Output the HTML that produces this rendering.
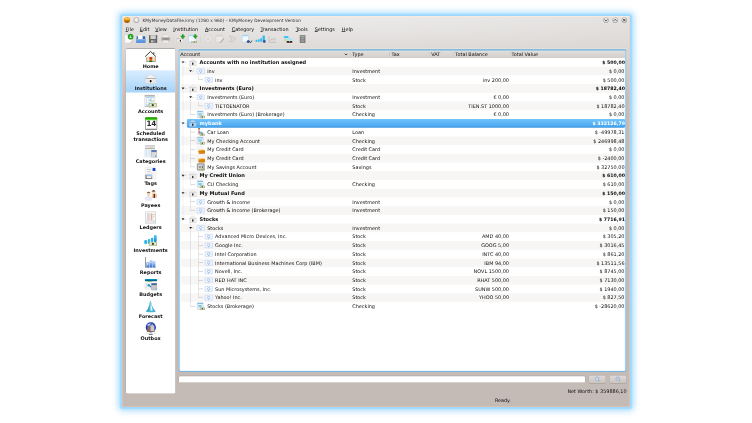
<!DOCTYPE html>
<html lang="en"><head><meta charset="utf-8"><title>KMyMoney</title>
<style>
html,body{margin:0;padding:0;background:#fff;}
body{width:752px;height:423px;overflow:hidden;position:relative;font-family:"DejaVu Sans","Liberation Sans",sans-serif;font-size:4.93px;color:#0c0c0c;line-height:1;}
#root{position:absolute;left:0;top:0;width:752px;height:423px;will-change:transform;}
*{box-sizing:border-box;}
.abs{position:absolute;}
#win{position:absolute;left:122px;top:16px;width:508px;height:391px;border-radius:1.6px;
 background:radial-gradient(ellipse 300px 42px at 45% 0,rgba(255,255,255,.28),rgba(255,255,255,0) 100%),linear-gradient(to bottom,#e5e3e1 0px,#dfdcda 22px,#dad6d3 36px,#cfc9c5 58px,#c7beba 80px,#c4bab6 100px);
 box-shadow:inset 0 .7px 0 rgba(255,248,242,.7),inset 0 0 0 .8px rgba(248,200,175,.55),0 0 1.6px 1.1px rgba(156,217,255,1),0 0 6px 3.3px rgba(160,216,255,.85);}
.t{position:absolute;white-space:nowrap;line-height:6px;height:6px;}
.b{font-weight:bold;font-size:5.0px;}
.bv{font-size:4.65px;}
u{text-decoration:underline;text-decoration-thickness:.4px;text-underline-offset:.15px;text-decoration-color:#555;}
.sl{position:absolute;left:126px;width:49.3px;text-align:center;font-weight:bold;line-height:6px;height:6px;white-space:nowrap;color:#111;}
.w{color:#fff;}
.ra{text-align:right;}
#ov,#un{position:absolute;left:0;top:0;width:752px;height:423px;pointer-events:none;}
</style></head><body><div id="root">
<div id="win"></div>
<svg id="un" viewBox="0 0 752 423" width="752" height="423"><defs>
<linearGradient id="gs" x1="0" y1="0" x2="0" y2="1"><stop offset="0" stop-color="#d9edff"/><stop offset="1" stop-color="#a6d3f9"/></linearGradient>
<linearGradient id="gtf" x1="0" y1="0" x2="0" y2="1"><stop offset="0" stop-color="#84bcdc"/><stop offset=".007" stop-color="#84bcdc"/><stop offset=".013" stop-color="#7cc6f6"/><stop offset=".99" stop-color="#7cc6f6"/><stop offset="1" stop-color="#66a6d4"/></linearGradient>
<linearGradient id="gh" x1="0" y1="0" x2="0" y2="1"><stop offset="0" stop-color="#e6e2df"/><stop offset=".12" stop-color="#dedbd8"/><stop offset="1" stop-color="#d3cfcc"/></linearGradient>
<linearGradient id="gsel" x1="0" y1="0" x2="0" y2="1"><stop offset="0" stop-color="#72c4fc"/><stop offset=".4" stop-color="#5eb6f6"/><stop offset=".8" stop-color="#4eaaf0"/><stop offset="1" stop-color="#3b98e2"/></linearGradient>
<linearGradient id="gbt" x1="0" y1="0" x2="0" y2="1"><stop offset="0" stop-color="#dedad7"/><stop offset="1" stop-color="#cbc5c1"/></linearGradient>
</defs>
<rect x="125.7" y="48.5" width="49.9" height="345.3" rx="1.5" fill="#8f8a86" opacity=".45"/>
<rect x="126.3" y="48.35" width="48.7" height="1.2" rx=".6" fill="#8f8b88" opacity=".6"/>
<rect x="126" y="49.1" width="49.3" height="344.4" rx="1.2" fill="#fff"/>
<rect x="126" y="70.3" width="49.3" height="22.3" rx="1" fill="url(#gs)"/>
<rect x="178.7" y="48.5" width="447.5" height="2" rx="1" fill="#f6e4da" opacity=".9"/>
<rect x="178.7" y="49" width="447.5" height="323" rx="1.4" fill="url(#gtf)"/>
<rect x="179.8" y="50.9" width="445.3" height="320" rx=".5" fill="#fff"/>
<rect x="179.8" y="50.9" width="445.3" height="320" rx=".5" fill="none" stroke="#bfe4fc" stroke-width=".6" opacity=".8"/>
<rect x="179.8" y="50.9" width="445.3" height="7.1" fill="url(#gh)"/>
<rect x="181.3" y="66.71" width="443.8" height="8.714" fill="#f7f6f5"/>
<rect x="181.3" y="84.14" width="443.8" height="8.714" fill="#f7f6f5"/>
<rect x="181.3" y="101.57" width="443.8" height="8.714" fill="#f7f6f5"/>
<rect x="186.9" y="119.05" width="438.3" height="8.6" rx="1.4" fill="url(#gsel)"/>
<rect x="181.3" y="136.43" width="443.8" height="8.714" fill="#f7f6f5"/>
<rect x="181.3" y="153.85" width="443.8" height="8.714" fill="#f7f6f5"/>
<rect x="181.3" y="171.28" width="443.8" height="8.714" fill="#f7f6f5"/>
<rect x="181.3" y="188.71" width="443.8" height="8.714" fill="#f7f6f5"/>
<rect x="181.3" y="206.14" width="443.8" height="8.714" fill="#f7f6f5"/>
<rect x="181.3" y="223.57" width="443.8" height="8.714" fill="#f7f6f5"/>
<rect x="181.3" y="240.99" width="443.8" height="8.714" fill="#f7f6f5"/>
<rect x="181.3" y="258.42" width="443.8" height="8.714" fill="#f7f6f5"/>
<rect x="181.3" y="275.85" width="443.8" height="8.714" fill="#f7f6f5"/>
<rect x="181.3" y="293.28" width="443.8" height="8.714" fill="#f7f6f5"/>
<rect x="178.7" y="375.8" width="406.6" height="7.1" rx="1.4" fill="#8f8a86" opacity=".5"/>
<rect x="179" y="376.3" width="406" height="6.3" rx="1.2" fill="#fff"/>
<rect x="588.6" y="375.3" width="17.3" height="8.4" rx="1.7" fill="#8a847f" opacity=".45"/>
<rect x="588.9" y="375.4" width="16.7" height="7.7" rx="1.4" fill="url(#gbt)"/>
<rect x="609.3000000000001" y="375.3" width="17.3" height="8.4" rx="1.7" fill="#8a847f" opacity=".45"/>
<rect x="609.6" y="375.4" width="16.7" height="7.7" rx="1.4" fill="url(#gbt)"/></svg>

<div class="abs" style="left:124.1px;top:17px;width:6.3px;height:6.3px;border-radius:50%;background:radial-gradient(circle at 35% 28%,rgba(255,236,120,.9) 0,rgba(255,220,80,0) 30%),radial-gradient(circle at 70% 35%,rgba(255,230,100,.8) 0,rgba(255,220,80,0) 25%),linear-gradient(#f0b01c 0,#dc8c08 45%,#b85e02 80%,#9a4a00 100%);"></div>
<div class="t" style="left:142.5px;top:17.6px;font-size:4.36px;color:#333;">KMyMoneyDataFile.kmy (1280 x 960) – KMyMoney Development Version</div>
<div class="t" style="left:125.6px;top:26.2px;"><u>F</u>ile</div>
<div class="t" style="left:139.8px;top:26.2px;"><u>E</u>dit</div>
<div class="t" style="left:155.2px;top:26.2px;"><u>V</u>iew</div>
<div class="t" style="left:173.3px;top:26.2px;"><u>I</u>nstitution</div>
<div class="t" style="left:205px;top:26.2px;"><u>A</u>ccount</div>
<div class="t" style="left:231.8px;top:26.2px;"><u>C</u>ategory</div>
<div class="t" style="left:260.5px;top:26.2px;"><u>T</u>ransaction</div>
<div class="t" style="left:295.7px;top:26.2px;"><u>T</u>ools</div>
<div class="t" style="left:314.7px;top:26.2px;"><u>S</u>ettings</div>
<div class="t" style="left:341.7px;top:26.2px;"><u>H</u>elp</div>
<div class="sl" style="top:63.10px;">Home</div>
<div class="sl" style="top:85.40px;">Institutions</div>
<div class="sl" style="top:107.60px;">Accounts</div>
<div class="sl" style="top:130.45px;height:12px;line-height:6px;">Scheduled<br>transactions</div>
<div class="sl" style="top:157.60px;">Categories</div>
<div class="sl" style="top:179.90px;">Tags</div>
<div class="sl" style="top:202.10px;">Payees</div>
<div class="sl" style="top:224.30px;">Ledgers</div>
<div class="sl" style="top:246.50px;">Investments</div>
<div class="sl" style="top:268.70px;">Reports</div>
<div class="sl" style="top:290.90px;">Budgets</div>
<div class="sl" style="top:313.10px;">Forecast</div>
<div class="sl" style="top:335.30px;">Outbox</div>
<div class="t" style="left:180.3px;top:51.35px;">Account</div>
<div class="t" style="left:352.3px;top:51.35px;">Type</div>
<div class="t" style="left:391.6px;top:51.35px;">Tax</div>
<div class="t" style="left:431.3px;top:51.35px;">VAT</div>
<div class="t" style="left:455.3px;top:51.35px;">Total Balance</div>
<div class="t" style="left:511.6px;top:51.35px;">Total Value</div>
<div class="t b" style="left:199.60px;top:59.08px;">Accounts with no institution assigned</div>
<div class="t b ra" style="left:524.9px;width:100px;top:59.08px;"><span class="bv">$ 500,00</span></div>
<div class="t" style="left:207.20px;top:67.82px;">inv</div>
<div class="t" style="left:352.3px;top:67.82px;">Investment</div>
<div class="t ra" style="left:524.5px;width:100px;top:67.82px;">$ 0,00</div>
<div class="t" style="left:215.10px;top:76.53px;">inv</div>
<div class="t" style="left:352.3px;top:76.53px;">Stock</div>
<div class="t ra" style="left:409px;width:100px;top:76.53px;">inv 200,00</div>
<div class="t ra" style="left:524.5px;width:100px;top:76.53px;">$ 500,00</div>
<div class="t b" style="left:199.60px;top:85.22px;">Investments (Euro)</div>
<div class="t b ra" style="left:524.9px;width:100px;top:85.22px;"><span class="bv">$ 18782,40</span></div>
<div class="t" style="left:207.20px;top:93.96px;">Investments (Euro)</div>
<div class="t" style="left:352.3px;top:93.96px;">Investment</div>
<div class="t ra" style="left:409px;width:100px;top:93.96px;">€ 0,00</div>
<div class="t ra" style="left:524.5px;width:100px;top:93.96px;">$ 0,00</div>
<div class="t" style="left:215.10px;top:102.68px;">TIETOENATOR</div>
<div class="t" style="left:352.3px;top:102.68px;">Stock</div>
<div class="t ra" style="left:409px;width:100px;top:102.68px;">TIEN.ST 1000,00</div>
<div class="t ra" style="left:524.5px;width:100px;top:102.68px;">$ 18782,40</div>
<div class="t" style="left:207.20px;top:111.39px;">Investments (Euro) (Brokerage)</div>
<div class="t" style="left:352.3px;top:111.39px;">Checking</div>
<div class="t ra" style="left:409px;width:100px;top:111.39px;">€ 0,00</div>
<div class="t ra" style="left:524.5px;width:100px;top:111.39px;">$ 0,00</div>
<div class="t b w" style="left:199.60px;top:120.08px;">mybank</div>
<div class="t b w ra" style="left:524.9px;width:100px;top:120.08px;"><span class="bv">$ 332126,79</span></div>
<div class="t" style="left:207.20px;top:128.82px;">Car Loan</div>
<div class="t" style="left:352.3px;top:128.82px;">Loan</div>
<div class="t ra" style="left:524.5px;width:100px;top:128.82px;">$ -49978,31</div>
<div class="t" style="left:207.20px;top:137.53px;">My Checking Account</div>
<div class="t" style="left:352.3px;top:137.53px;">Checking</div>
<div class="t ra" style="left:524.5px;width:100px;top:137.53px;">$ 246998,48</div>
<div class="t" style="left:207.20px;top:146.25px;">My Credit Card</div>
<div class="t" style="left:352.3px;top:146.25px;">Credit Card</div>
<div class="t ra" style="left:524.5px;width:100px;top:146.25px;">$ 0,00</div>
<div class="t" style="left:207.20px;top:154.96px;">My Credit Card</div>
<div class="t" style="left:352.3px;top:154.96px;">Credit Card</div>
<div class="t ra" style="left:524.5px;width:100px;top:154.96px;">$ -2400,00</div>
<div class="t" style="left:207.20px;top:163.68px;">My Savings Account</div>
<div class="t" style="left:352.3px;top:163.68px;">Savings</div>
<div class="t ra" style="left:524.5px;width:100px;top:163.68px;">$ 32750,00</div>
<div class="t b" style="left:199.60px;top:172.36px;">My Credit Union</div>
<div class="t b ra" style="left:524.9px;width:100px;top:172.36px;"><span class="bv">$ 610,00</span></div>
<div class="t" style="left:207.20px;top:181.10px;">CU Checking</div>
<div class="t" style="left:352.3px;top:181.10px;">Checking</div>
<div class="t ra" style="left:524.5px;width:100px;top:181.10px;">$ 610,00</div>
<div class="t b" style="left:199.60px;top:189.79px;">My Mutual Fund</div>
<div class="t b ra" style="left:524.9px;width:100px;top:189.79px;"><span class="bv">$ 150,00</span></div>
<div class="t" style="left:207.20px;top:198.53px;">Growth &amp; Income</div>
<div class="t" style="left:352.3px;top:198.53px;">Investment</div>
<div class="t ra" style="left:524.5px;width:100px;top:198.53px;">$ 0,00</div>
<div class="t" style="left:207.20px;top:207.25px;">Growth &amp; Income (Brokerage)</div>
<div class="t" style="left:352.3px;top:207.25px;">Investment</div>
<div class="t ra" style="left:524.5px;width:100px;top:207.25px;">$ 150,00</div>
<div class="t b" style="left:199.60px;top:215.93px;">Stocks</div>
<div class="t b ra" style="left:524.9px;width:100px;top:215.93px;"><span class="bv">$ 7716,91</span></div>
<div class="t" style="left:207.20px;top:224.67px;">Stocks</div>
<div class="t" style="left:352.3px;top:224.67px;">Investment</div>
<div class="t ra" style="left:524.5px;width:100px;top:224.67px;">$ 0,00</div>
<div class="t" style="left:215.10px;top:233.39px;">Advanced Micro Devices, Inc.</div>
<div class="t" style="left:352.3px;top:233.39px;">Stock</div>
<div class="t ra" style="left:409px;width:100px;top:233.39px;">AMD 40,00</div>
<div class="t ra" style="left:524.5px;width:100px;top:233.39px;">$ 305,20</div>
<div class="t" style="left:215.10px;top:242.10px;">Google Inc.</div>
<div class="t" style="left:352.3px;top:242.10px;">Stock</div>
<div class="t ra" style="left:409px;width:100px;top:242.10px;">GOOG 5,00</div>
<div class="t ra" style="left:524.5px;width:100px;top:242.10px;">$ 3016,45</div>
<div class="t" style="left:215.10px;top:250.81px;">Intel Corporation</div>
<div class="t" style="left:352.3px;top:250.81px;">Stock</div>
<div class="t ra" style="left:409px;width:100px;top:250.81px;">INTC 40,00</div>
<div class="t ra" style="left:524.5px;width:100px;top:250.81px;">$ 861,20</div>
<div class="t" style="left:215.10px;top:259.53px;">International Business Machines Corp (IBM)</div>
<div class="t" style="left:352.3px;top:259.53px;">Stock</div>
<div class="t ra" style="left:409px;width:100px;top:259.53px;">IBM 94,00</div>
<div class="t ra" style="left:524.5px;width:100px;top:259.53px;">$ 13511,56</div>
<div class="t" style="left:215.10px;top:268.24px;">Novell, Inc.</div>
<div class="t" style="left:352.3px;top:268.24px;">Stock</div>
<div class="t ra" style="left:409px;width:100px;top:268.24px;">NOVL 1500,00</div>
<div class="t ra" style="left:524.5px;width:100px;top:268.24px;">$ 8745,00</div>
<div class="t" style="left:215.10px;top:276.96px;">RED HAT INC</div>
<div class="t" style="left:352.3px;top:276.96px;">Stock</div>
<div class="t ra" style="left:409px;width:100px;top:276.96px;">RHAT 500,00</div>
<div class="t ra" style="left:524.5px;width:100px;top:276.96px;">$ 7130,00</div>
<div class="t" style="left:215.10px;top:285.67px;">Sun Microsystems, Inc.</div>
<div class="t" style="left:352.3px;top:285.67px;">Stock</div>
<div class="t ra" style="left:409px;width:100px;top:285.67px;">SUNW 500,00</div>
<div class="t ra" style="left:524.5px;width:100px;top:285.67px;">$ 1940,00</div>
<div class="t" style="left:215.10px;top:294.39px;">Yahoo! Inc.</div>
<div class="t" style="left:352.3px;top:294.39px;">Stock</div>
<div class="t ra" style="left:409px;width:100px;top:294.39px;">YHOO 50,00</div>
<div class="t ra" style="left:524.5px;width:100px;top:294.39px;">$ 827,50</div>
<div class="t" style="left:207.20px;top:303.10px;">Stocks (Brokerage)</div>
<div class="t" style="left:352.3px;top:303.10px;">Checking</div>
<div class="t ra" style="left:524.5px;width:100px;top:303.10px;">$ -28620,00</div>
<div class="t ra" style="left:526.6px;width:100px;top:387.8px;">Net Worth: $ 359886,10</div>
<div class="t" style="left:495px;top:398.3px;font-size:4.8px;">Ready.</div>
<div class="t" style="left:145.2px;top:120.3px;width:12px;text-align:center;font-weight:bold;font-size:7.2px;line-height:8px;height:8px;color:#26262e;letter-spacing:-.35px;z-index:5;">14</div>
<svg id="ov" viewBox="0 0 752 423" width="752" height="423"><defs>
<linearGradient id="gb" x1="0" y1="0" x2="0" y2="1"><stop offset="0" stop-color="#5cccf4"/><stop offset="1" stop-color="#0c88cc"/></linearGradient>
<linearGradient id="gr" x1="0" y1="0" x2="0" y2="1"><stop offset="0" stop-color="#a8c8f4"/><stop offset="1" stop-color="#3a78d0"/></linearGradient>
<linearGradient id="gt" x1="0" y1="0" x2="0" y2="1"><stop offset="0" stop-color="#00a4c4"/><stop offset="1" stop-color="#004c7c"/></linearGradient>
<linearGradient id="gc" x1="0" y1="0" x2="0" y2="1"><stop offset="0" stop-color="#f2ae24"/><stop offset=".6" stop-color="#e08c10"/><stop offset="1" stop-color="#c06c04"/></linearGradient>
<linearGradient id="gf" x1="0" y1="0" x2="1" y2="0"><stop offset="0" stop-color="#1c8cac"/><stop offset=".6" stop-color="#6ccce4"/><stop offset="1" stop-color="#2c9cbc"/></linearGradient>
</defs>
<circle cx="136.30" cy="20.00" r="2.95" fill="#c9c6c4"/>
<circle cx="136.30" cy="20.30" r="2.60" fill="#b3b0ae"/>
<circle cx="136.30" cy="19.90" r="2.00" fill="#e9e8e7"/>
<circle cx="136.30" cy="19.60" r="1.10" fill="#f8f8f8"/>
<circle cx="606.00" cy="20.10" r="2.95" fill="#cac7c5"/>
<circle cx="606.00" cy="20.35" r="2.60" fill="#aeaba9"/>
<circle cx="606.00" cy="20.00" r="2.10" fill="#ebeae9"/>
<circle cx="606.00" cy="19.60" r="1.20" fill="#f6f6f6"/>
<path d="M604.7 19.5 L606 20.9 L607.3 19.5" fill="none" stroke="#2a2a2a" stroke-width="0.9"/>
<circle cx="615.20" cy="20.10" r="2.95" fill="#cac7c5"/>
<circle cx="615.20" cy="20.35" r="2.60" fill="#aeaba9"/>
<circle cx="615.20" cy="20.00" r="2.10" fill="#ebeae9"/>
<circle cx="615.20" cy="19.60" r="1.20" fill="#f6f6f6"/>
<path d="M613.9000000000001 20.7 L615.2 19.3 L616.5 20.7" fill="none" stroke="#2a2a2a" stroke-width="0.9"/>
<circle cx="624.30" cy="20.10" r="2.95" fill="#cac7c5"/>
<circle cx="624.30" cy="20.35" r="2.60" fill="#aeaba9"/>
<circle cx="624.30" cy="20.00" r="2.10" fill="#ebeae9"/>
<circle cx="624.30" cy="19.60" r="1.20" fill="#f6f6f6"/>
<path d="M623.0999999999999 18.9 L625.5 21.3 M625.5 18.9 L623.0999999999999 21.3" fill="none" stroke="#2a2a2a" stroke-width="0.9"/>
<rect x="350.30" y="52.20" width="0.40" height="4.40" fill="#9c9793"/>
<rect x="350.70" y="52.20" width="0.30" height="4.40" fill="#f2f0ee"/>
<rect x="389.50" y="52.20" width="0.40" height="4.40" fill="#9c9793"/>
<rect x="389.90" y="52.20" width="0.30" height="4.40" fill="#f2f0ee"/>
<rect x="429.20" y="52.20" width="0.40" height="4.40" fill="#9c9793"/>
<rect x="429.60" y="52.20" width="0.30" height="4.40" fill="#f2f0ee"/>
<rect x="453.20" y="52.20" width="0.40" height="4.40" fill="#9c9793"/>
<rect x="453.60" y="52.20" width="0.30" height="4.40" fill="#f2f0ee"/>
<rect x="510.10" y="52.20" width="0.40" height="4.40" fill="#9c9793"/>
<rect x="510.50" y="52.20" width="0.30" height="4.40" fill="#f2f0ee"/>
<path d="M344.7 53.7 L346.0 55.0 L347.3 53.7" fill="none" stroke="#222" stroke-width="0.8"/>
<rect x="189.25" y="61.43" width="7.00" height="3.96" fill="#f3f2f1" stroke="#dad7d5" stroke-width="0.3"/>
<path d="M189.50 61.43 L191.21 59.56 L192.75 59.11 L194.29 59.56 L196.00 61.43 Z" fill="#f3f2f1" stroke="#dad7d5" stroke-width="0.35"/>
<rect x="189.20" y="61.17" width="7.10" height="0.59" fill="#cfccca"/>
<rect x="190.14" y="61.83" width="0.60" height="3.30" fill="#e2e0de"/>
<rect x="194.76" y="61.83" width="0.60" height="3.30" fill="#e2e0de"/>
<ellipse cx="192.80" cy="63.68" rx="0.65" ry="1.25" fill="#0a0a0a"/>
<rect x="188.90" y="65.20" width="7.70" height="0.53" fill="#d6d3d0"/>
<path d="M181.50 61.46 L184.50 61.46 L183.00 63.36 Z" fill="#222"/>
<rect x="184.60" y="62.16" width="1.80" height="0.40" fill="#a8a8a8"/>
<rect x="182.80" y="63.96" width="0.40" height="2.76" fill="#dadada"/>
<rect x="197.00" y="68.67" width="7.40" height="4.90" fill="#f2f6fd" rx="0.2" stroke="#a9c6ee" stroke-width="0.6" stroke-dasharray="1.2 0.5"/>
<circle cx="200.70" cy="70.97" r="1.25" fill="#f7faff" stroke="#7aa6e0" stroke-width="0.55"/>
<rect x="200.20" y="72.07" width="1.00" height="0.80" fill="#8fb3e6"/>
<path d="M189.10 70.17 L192.10 70.17 L190.60 72.07 Z" fill="#222"/>
<rect x="192.20" y="70.87" width="1.80" height="0.40" fill="#a8a8a8"/>
<rect x="190.40" y="66.71" width="0.40" height="2.76" fill="#c2c2c2"/>
<rect x="182.80" y="66.71" width="0.40" height="8.71" fill="#dadada"/>
<rect x="205.00" y="77.38" width="7.40" height="4.90" fill="#f2f6fd" rx="0.2" stroke="#a9c6ee" stroke-width="0.6" stroke-dasharray="1.2 0.5"/>
<circle cx="208.70" cy="79.68" r="1.25" fill="#f7faff" stroke="#7aa6e0" stroke-width="0.55"/>
<rect x="208.20" y="80.78" width="1.00" height="0.80" fill="#8fb3e6"/>
<rect x="198.60" y="79.58" width="4.40" height="0.40" fill="#a8a8a8"/>
<rect x="198.40" y="75.43" width="0.40" height="4.56" fill="#c2c2c2"/>
<rect x="182.80" y="75.43" width="0.40" height="8.71" fill="#dadada"/>
<rect x="189.25" y="87.58" width="7.00" height="3.96" fill="#f3f2f1" stroke="#dad7d5" stroke-width="0.3"/>
<path d="M189.50 87.58 L191.21 85.70 L192.75 85.25 L194.29 85.70 L196.00 87.58 Z" fill="#f3f2f1" stroke="#dad7d5" stroke-width="0.35"/>
<rect x="189.20" y="87.31" width="7.10" height="0.59" fill="#cfccca"/>
<rect x="190.14" y="87.97" width="0.60" height="3.30" fill="#e2e0de"/>
<rect x="194.76" y="87.97" width="0.60" height="3.30" fill="#e2e0de"/>
<ellipse cx="192.80" cy="89.82" rx="0.65" ry="1.25" fill="#0a0a0a"/>
<rect x="188.90" y="91.34" width="7.70" height="0.53" fill="#d6d3d0"/>
<path d="M181.50 87.60 L184.50 87.60 L183.00 89.50 Z" fill="#222"/>
<rect x="184.60" y="88.30" width="1.80" height="0.40" fill="#a8a8a8"/>
<rect x="182.80" y="90.10" width="0.40" height="2.76" fill="#dadada"/>
<rect x="182.80" y="84.14" width="0.40" height="2.76" fill="#dadada"/>
<rect x="197.00" y="94.81" width="7.40" height="4.90" fill="#f2f6fd" rx="0.2" stroke="#a9c6ee" stroke-width="0.6" stroke-dasharray="1.2 0.5"/>
<circle cx="200.70" cy="97.11" r="1.25" fill="#f7faff" stroke="#7aa6e0" stroke-width="0.55"/>
<rect x="200.20" y="98.21" width="1.00" height="0.80" fill="#8fb3e6"/>
<path d="M189.10 96.31 L192.10 96.31 L190.60 98.21 Z" fill="#222"/>
<rect x="192.20" y="97.01" width="1.80" height="0.40" fill="#a8a8a8"/>
<rect x="190.40" y="98.81" width="0.40" height="2.76" fill="#c2c2c2"/>
<rect x="190.40" y="92.86" width="0.40" height="2.76" fill="#c2c2c2"/>
<rect x="182.80" y="92.86" width="0.40" height="8.71" fill="#dadada"/>
<rect x="205.00" y="103.53" width="7.40" height="4.90" fill="#f2f6fd" rx="0.2" stroke="#a9c6ee" stroke-width="0.6" stroke-dasharray="1.2 0.5"/>
<circle cx="208.70" cy="105.83" r="1.25" fill="#f7faff" stroke="#7aa6e0" stroke-width="0.55"/>
<rect x="208.20" y="106.93" width="1.00" height="0.80" fill="#8fb3e6"/>
<rect x="198.60" y="105.73" width="4.40" height="0.40" fill="#a8a8a8"/>
<rect x="198.40" y="101.57" width="0.40" height="4.56" fill="#c2c2c2"/>
<rect x="182.80" y="101.57" width="0.40" height="8.71" fill="#dadada"/>
<rect x="190.40" y="101.57" width="0.40" height="8.71" fill="#c2c2c2"/>
<rect x="197.20" y="111.04" width="6.00" height="6.60" fill="#eaf3fb" rx="0.3" stroke="#a8b8c8" stroke-width="0.4"/>
<rect x="197.50" y="111.24" width="5.40" height="0.90" fill="#7ab0e0"/>
<rect x="198.20" y="113.24" width="3.60" height="2.20" fill="#7fd0ee"/>
<rect x="199.80" y="115.74" width="5.00" height="2.60" fill="#96a26e" rx="0.4"/>
<rect x="200.30" y="116.19" width="4.00" height="1.70" fill="#e2e6c4" rx="0.3"/>
<circle cx="202.30" cy="117.04" r="0.70" fill="#3c4426"/>
<rect x="190.60" y="114.44" width="4.40" height="0.40" fill="#a8a8a8"/>
<rect x="190.40" y="110.28" width="0.40" height="4.56" fill="#c2c2c2"/>
<rect x="182.80" y="110.28" width="0.40" height="8.71" fill="#dadada"/>
<rect x="189.25" y="122.43" width="7.00" height="3.96" fill="#b4d6f4" stroke="#86b4dc" stroke-width="0.3"/>
<path d="M189.50 122.43 L191.21 120.56 L192.75 120.11 L194.29 120.56 L196.00 122.43 Z" fill="#b4d6f4" stroke="#86b4dc" stroke-width="0.35"/>
<rect x="189.20" y="122.17" width="7.10" height="0.59" fill="#7aa8d0"/>
<rect x="190.14" y="122.83" width="0.60" height="3.30" fill="#9cc4e8"/>
<rect x="194.76" y="122.83" width="0.60" height="3.30" fill="#9cc4e8"/>
<ellipse cx="192.80" cy="124.68" rx="0.65" ry="1.25" fill="#0a0a0a"/>
<rect x="188.90" y="126.19" width="7.70" height="0.53" fill="#8ab8e0"/>
<path d="M181.50 122.45 L184.50 122.45 L183.00 124.36 Z" fill="#222"/>
<rect x="184.60" y="123.16" width="1.80" height="0.40" fill="#a8a8a8"/>
<rect x="182.80" y="124.95" width="0.40" height="2.76" fill="#dadada"/>
<rect x="182.80" y="119.00" width="0.40" height="2.76" fill="#dadada"/>
<circle cx="199.10" cy="129.67" r="1.10" fill="#e9b894"/>
<rect x="198.10" y="128.37" width="2.00" height="0.90" fill="#6a3c1c" rx="0.4"/>
<rect x="197.80" y="130.67" width="2.60" height="4.20" fill="#e4ccd8" rx="0.6"/>
<rect x="198.70" y="130.87" width="0.80" height="2.60" fill="#b03030"/>
<rect x="200.20" y="131.67" width="2.40" height="2.60" fill="#58b8e8" rx="0.5"/>
<rect x="199.80" y="133.47" width="4.80" height="2.40" fill="#96a26e" rx="0.4"/>
<rect x="200.30" y="133.92" width="3.80" height="1.50" fill="#e2e6c4" rx="0.3"/>
<circle cx="202.20" cy="134.67" r="0.65" fill="#3c4426"/>
<rect x="190.60" y="131.87" width="4.40" height="0.40" fill="#a8a8a8"/>
<rect x="190.40" y="127.71" width="0.40" height="8.71" fill="#c2c2c2"/>
<rect x="182.80" y="127.71" width="0.40" height="8.71" fill="#dadada"/>
<rect x="197.20" y="137.18" width="6.00" height="6.60" fill="#eaf3fb" rx="0.3" stroke="#a8b8c8" stroke-width="0.4"/>
<rect x="197.50" y="137.38" width="5.40" height="0.90" fill="#7ab0e0"/>
<rect x="198.20" y="139.38" width="3.60" height="2.20" fill="#7fd0ee"/>
<rect x="199.80" y="141.88" width="5.00" height="2.60" fill="#96a26e" rx="0.4"/>
<rect x="200.30" y="142.33" width="4.00" height="1.70" fill="#e2e6c4" rx="0.3"/>
<circle cx="202.30" cy="143.18" r="0.70" fill="#3c4426"/>
<rect x="190.60" y="140.58" width="4.40" height="0.40" fill="#a8a8a8"/>
<rect x="190.40" y="136.43" width="0.40" height="8.71" fill="#c2c2c2"/>
<rect x="182.80" y="136.43" width="0.40" height="8.71" fill="#dadada"/>
<rect x="196.60" y="146.20" width="6.60" height="4.00" fill="#f6f5f8" rx="0.3" stroke="#e6e4ea" stroke-width="0.3"/>
<rect x="198.50" y="149.70" width="6.5" height="4.1" rx="0.7" fill="url(#gc)"/>
<rect x="198.50" y="150.90" width="6.50" height="0.70" fill="#c06a06"/>
<rect x="198.80" y="149.90" width="2.00" height="0.80" fill="#fbd45c" rx="0.3"/>
<rect x="190.60" y="149.30" width="4.40" height="0.40" fill="#a8a8a8"/>
<rect x="190.40" y="145.14" width="0.40" height="8.71" fill="#c2c2c2"/>
<rect x="182.80" y="145.14" width="0.40" height="8.71" fill="#dadada"/>
<rect x="196.60" y="154.91" width="6.60" height="4.00" fill="#f6f5f8" rx="0.3" stroke="#e6e4ea" stroke-width="0.3"/>
<rect x="198.50" y="158.41" width="6.5" height="4.1" rx="0.7" fill="url(#gc)"/>
<rect x="198.50" y="159.61" width="6.50" height="0.70" fill="#c06a06"/>
<rect x="198.80" y="158.61" width="2.00" height="0.80" fill="#fbd45c" rx="0.3"/>
<rect x="190.60" y="158.01" width="4.40" height="0.40" fill="#a8a8a8"/>
<rect x="190.40" y="153.85" width="0.40" height="8.71" fill="#c2c2c2"/>
<rect x="182.80" y="153.85" width="0.40" height="8.71" fill="#dadada"/>
<rect x="197.20" y="163.62" width="7.20" height="6.60" fill="#a4a6a2" rx="0.6" stroke="#6c6e68" stroke-width="0.4"/>
<rect x="198.00" y="164.43" width="5.40" height="4.80" fill="#d9dad7" rx="0.3"/>
<circle cx="200.00" cy="167.03" r="1.30" fill="#7c7e78"/>
<circle cx="200.00" cy="166.93" r="0.60" fill="#e0e0da"/>
<rect x="202.20" y="165.62" width="0.80" height="2.60" fill="#50544c"/>
<rect x="201.00" y="168.62" width="3.80" height="1.90" fill="#a8b27a" rx="0.3"/>
<rect x="190.60" y="166.73" width="4.40" height="0.40" fill="#a8a8a8"/>
<rect x="190.40" y="162.57" width="0.40" height="4.56" fill="#c2c2c2"/>
<rect x="182.80" y="162.57" width="0.40" height="8.71" fill="#dadada"/>
<rect x="189.25" y="174.72" width="7.00" height="3.96" fill="#f3f2f1" stroke="#dad7d5" stroke-width="0.3"/>
<path d="M189.50 174.72 L191.21 172.84 L192.75 172.39 L194.29 172.84 L196.00 174.72 Z" fill="#f3f2f1" stroke="#dad7d5" stroke-width="0.35"/>
<rect x="189.20" y="174.45" width="7.10" height="0.59" fill="#cfccca"/>
<rect x="190.14" y="175.11" width="0.60" height="3.30" fill="#e2e0de"/>
<rect x="194.76" y="175.11" width="0.60" height="3.30" fill="#e2e0de"/>
<ellipse cx="192.80" cy="176.96" rx="0.65" ry="1.25" fill="#0a0a0a"/>
<rect x="188.90" y="178.48" width="7.70" height="0.53" fill="#d6d3d0"/>
<path d="M181.50 174.74 L184.50 174.74 L183.00 176.64 Z" fill="#222"/>
<rect x="184.60" y="175.44" width="1.80" height="0.40" fill="#a8a8a8"/>
<rect x="182.80" y="177.24" width="0.40" height="2.76" fill="#dadada"/>
<rect x="182.80" y="171.28" width="0.40" height="2.76" fill="#dadada"/>
<rect x="197.20" y="180.75" width="6.00" height="6.60" fill="#eaf3fb" rx="0.3" stroke="#a8b8c8" stroke-width="0.4"/>
<rect x="197.50" y="180.95" width="5.40" height="0.90" fill="#7ab0e0"/>
<rect x="198.20" y="182.95" width="3.60" height="2.20" fill="#7fd0ee"/>
<rect x="199.80" y="185.45" width="5.00" height="2.60" fill="#96a26e" rx="0.4"/>
<rect x="200.30" y="185.90" width="4.00" height="1.70" fill="#e2e6c4" rx="0.3"/>
<circle cx="202.30" cy="186.75" r="0.70" fill="#3c4426"/>
<rect x="190.60" y="184.15" width="4.40" height="0.40" fill="#a8a8a8"/>
<rect x="190.40" y="180.00" width="0.40" height="4.56" fill="#c2c2c2"/>
<rect x="182.80" y="180.00" width="0.40" height="8.71" fill="#dadada"/>
<rect x="189.25" y="192.14" width="7.00" height="3.96" fill="#f3f2f1" stroke="#dad7d5" stroke-width="0.3"/>
<path d="M189.50 192.14 L191.21 190.27 L192.75 189.82 L194.29 190.27 L196.00 192.14 Z" fill="#f3f2f1" stroke="#dad7d5" stroke-width="0.35"/>
<rect x="189.20" y="191.88" width="7.10" height="0.59" fill="#cfccca"/>
<rect x="190.14" y="192.54" width="0.60" height="3.30" fill="#e2e0de"/>
<rect x="194.76" y="192.54" width="0.60" height="3.30" fill="#e2e0de"/>
<ellipse cx="192.80" cy="194.39" rx="0.65" ry="1.25" fill="#0a0a0a"/>
<rect x="188.90" y="195.91" width="7.70" height="0.53" fill="#d6d3d0"/>
<path d="M181.50 192.17 L184.50 192.17 L183.00 194.07 Z" fill="#222"/>
<rect x="184.60" y="192.87" width="1.80" height="0.40" fill="#a8a8a8"/>
<rect x="182.80" y="194.67" width="0.40" height="2.76" fill="#dadada"/>
<rect x="182.80" y="188.71" width="0.40" height="2.76" fill="#dadada"/>
<rect x="197.00" y="199.38" width="7.40" height="4.90" fill="#f2f6fd" rx="0.2" stroke="#a9c6ee" stroke-width="0.6" stroke-dasharray="1.2 0.5"/>
<circle cx="200.70" cy="201.68" r="1.25" fill="#f7faff" stroke="#7aa6e0" stroke-width="0.55"/>
<rect x="200.20" y="202.78" width="1.00" height="0.80" fill="#8fb3e6"/>
<rect x="190.60" y="201.58" width="4.40" height="0.40" fill="#a8a8a8"/>
<rect x="190.40" y="197.42" width="0.40" height="8.71" fill="#c2c2c2"/>
<rect x="182.80" y="197.42" width="0.40" height="8.71" fill="#dadada"/>
<rect x="197.00" y="208.09" width="7.40" height="4.90" fill="#f2f6fd" rx="0.2" stroke="#a9c6ee" stroke-width="0.6" stroke-dasharray="1.2 0.5"/>
<circle cx="200.70" cy="210.40" r="1.25" fill="#f7faff" stroke="#7aa6e0" stroke-width="0.55"/>
<rect x="200.20" y="211.50" width="1.00" height="0.80" fill="#8fb3e6"/>
<rect x="190.60" y="210.30" width="4.40" height="0.40" fill="#a8a8a8"/>
<rect x="190.40" y="206.14" width="0.40" height="4.56" fill="#c2c2c2"/>
<rect x="182.80" y="206.14" width="0.40" height="8.71" fill="#dadada"/>
<rect x="189.25" y="218.28" width="7.00" height="3.96" fill="#f3f2f1" stroke="#dad7d5" stroke-width="0.3"/>
<path d="M189.50 218.28 L191.21 216.41 L192.75 215.96 L194.29 216.41 L196.00 218.28 Z" fill="#f3f2f1" stroke="#dad7d5" stroke-width="0.35"/>
<rect x="189.20" y="218.02" width="7.10" height="0.59" fill="#cfccca"/>
<rect x="190.14" y="218.68" width="0.60" height="3.30" fill="#e2e0de"/>
<rect x="194.76" y="218.68" width="0.60" height="3.30" fill="#e2e0de"/>
<ellipse cx="192.80" cy="220.53" rx="0.65" ry="1.25" fill="#0a0a0a"/>
<rect x="188.90" y="222.05" width="7.70" height="0.53" fill="#d6d3d0"/>
<path d="M181.50 218.31 L184.50 218.31 L183.00 220.21 Z" fill="#222"/>
<rect x="184.60" y="219.01" width="1.80" height="0.40" fill="#a8a8a8"/>
<rect x="182.80" y="214.85" width="0.40" height="2.76" fill="#dadada"/>
<rect x="197.00" y="225.52" width="7.40" height="4.90" fill="#f2f6fd" rx="0.2" stroke="#a9c6ee" stroke-width="0.6" stroke-dasharray="1.2 0.5"/>
<circle cx="200.70" cy="227.82" r="1.25" fill="#f7faff" stroke="#7aa6e0" stroke-width="0.55"/>
<rect x="200.20" y="228.92" width="1.00" height="0.80" fill="#8fb3e6"/>
<path d="M189.10 227.02 L192.10 227.02 L190.60 228.92 Z" fill="#222"/>
<rect x="192.20" y="227.72" width="1.80" height="0.40" fill="#a8a8a8"/>
<rect x="190.40" y="229.52" width="0.40" height="2.76" fill="#c2c2c2"/>
<rect x="190.40" y="223.57" width="0.40" height="2.76" fill="#c2c2c2"/>
<rect x="205.00" y="234.24" width="7.40" height="4.90" fill="#f2f6fd" rx="0.2" stroke="#a9c6ee" stroke-width="0.6" stroke-dasharray="1.2 0.5"/>
<circle cx="208.70" cy="236.54" r="1.25" fill="#f7faff" stroke="#7aa6e0" stroke-width="0.55"/>
<rect x="208.20" y="237.64" width="1.00" height="0.80" fill="#8fb3e6"/>
<rect x="198.60" y="236.44" width="4.40" height="0.40" fill="#a8a8a8"/>
<rect x="198.40" y="232.28" width="0.40" height="8.71" fill="#c2c2c2"/>
<rect x="190.40" y="232.28" width="0.40" height="8.71" fill="#c2c2c2"/>
<rect x="205.00" y="242.95" width="7.40" height="4.90" fill="#f2f6fd" rx="0.2" stroke="#a9c6ee" stroke-width="0.6" stroke-dasharray="1.2 0.5"/>
<circle cx="208.70" cy="245.25" r="1.25" fill="#f7faff" stroke="#7aa6e0" stroke-width="0.55"/>
<rect x="208.20" y="246.35" width="1.00" height="0.80" fill="#8fb3e6"/>
<rect x="198.60" y="245.15" width="4.40" height="0.40" fill="#a8a8a8"/>
<rect x="198.40" y="240.99" width="0.40" height="8.71" fill="#c2c2c2"/>
<rect x="190.40" y="240.99" width="0.40" height="8.71" fill="#c2c2c2"/>
<rect x="205.00" y="251.66" width="7.40" height="4.90" fill="#f2f6fd" rx="0.2" stroke="#a9c6ee" stroke-width="0.6" stroke-dasharray="1.2 0.5"/>
<circle cx="208.70" cy="253.97" r="1.25" fill="#f7faff" stroke="#7aa6e0" stroke-width="0.55"/>
<rect x="208.20" y="255.06" width="1.00" height="0.80" fill="#8fb3e6"/>
<rect x="198.60" y="253.87" width="4.40" height="0.40" fill="#a8a8a8"/>
<rect x="198.40" y="249.71" width="0.40" height="8.71" fill="#c2c2c2"/>
<rect x="190.40" y="249.71" width="0.40" height="8.71" fill="#c2c2c2"/>
<rect x="205.00" y="260.38" width="7.40" height="4.90" fill="#f2f6fd" rx="0.2" stroke="#a9c6ee" stroke-width="0.6" stroke-dasharray="1.2 0.5"/>
<circle cx="208.70" cy="262.68" r="1.25" fill="#f7faff" stroke="#7aa6e0" stroke-width="0.55"/>
<rect x="208.20" y="263.78" width="1.00" height="0.80" fill="#8fb3e6"/>
<rect x="198.60" y="262.58" width="4.40" height="0.40" fill="#a8a8a8"/>
<rect x="198.40" y="258.42" width="0.40" height="8.71" fill="#c2c2c2"/>
<rect x="190.40" y="258.42" width="0.40" height="8.71" fill="#c2c2c2"/>
<rect x="205.00" y="269.09" width="7.40" height="4.90" fill="#f2f6fd" rx="0.2" stroke="#a9c6ee" stroke-width="0.6" stroke-dasharray="1.2 0.5"/>
<circle cx="208.70" cy="271.39" r="1.25" fill="#f7faff" stroke="#7aa6e0" stroke-width="0.55"/>
<rect x="208.20" y="272.49" width="1.00" height="0.80" fill="#8fb3e6"/>
<rect x="198.60" y="271.29" width="4.40" height="0.40" fill="#a8a8a8"/>
<rect x="198.40" y="267.14" width="0.40" height="8.71" fill="#c2c2c2"/>
<rect x="190.40" y="267.14" width="0.40" height="8.71" fill="#c2c2c2"/>
<rect x="205.00" y="277.81" width="7.40" height="4.90" fill="#f2f6fd" rx="0.2" stroke="#a9c6ee" stroke-width="0.6" stroke-dasharray="1.2 0.5"/>
<circle cx="208.70" cy="280.11" r="1.25" fill="#f7faff" stroke="#7aa6e0" stroke-width="0.55"/>
<rect x="208.20" y="281.21" width="1.00" height="0.80" fill="#8fb3e6"/>
<rect x="198.60" y="280.01" width="4.40" height="0.40" fill="#a8a8a8"/>
<rect x="198.40" y="275.85" width="0.40" height="8.71" fill="#c2c2c2"/>
<rect x="190.40" y="275.85" width="0.40" height="8.71" fill="#c2c2c2"/>
<rect x="205.00" y="286.52" width="7.40" height="4.90" fill="#f2f6fd" rx="0.2" stroke="#a9c6ee" stroke-width="0.6" stroke-dasharray="1.2 0.5"/>
<circle cx="208.70" cy="288.82" r="1.25" fill="#f7faff" stroke="#7aa6e0" stroke-width="0.55"/>
<rect x="208.20" y="289.92" width="1.00" height="0.80" fill="#8fb3e6"/>
<rect x="198.60" y="288.72" width="4.40" height="0.40" fill="#a8a8a8"/>
<rect x="198.40" y="284.56" width="0.40" height="8.71" fill="#c2c2c2"/>
<rect x="190.40" y="284.56" width="0.40" height="8.71" fill="#c2c2c2"/>
<rect x="205.00" y="295.24" width="7.40" height="4.90" fill="#f2f6fd" rx="0.2" stroke="#a9c6ee" stroke-width="0.6" stroke-dasharray="1.2 0.5"/>
<circle cx="208.70" cy="297.54" r="1.25" fill="#f7faff" stroke="#7aa6e0" stroke-width="0.55"/>
<rect x="208.20" y="298.64" width="1.00" height="0.80" fill="#8fb3e6"/>
<rect x="198.60" y="297.44" width="4.40" height="0.40" fill="#a8a8a8"/>
<rect x="198.40" y="293.28" width="0.40" height="4.56" fill="#c2c2c2"/>
<rect x="190.40" y="293.28" width="0.40" height="8.71" fill="#c2c2c2"/>
<rect x="197.20" y="302.75" width="6.00" height="6.60" fill="#eaf3fb" rx="0.3" stroke="#a8b8c8" stroke-width="0.4"/>
<rect x="197.50" y="302.95" width="5.40" height="0.90" fill="#7ab0e0"/>
<rect x="198.20" y="304.95" width="3.60" height="2.20" fill="#7fd0ee"/>
<rect x="199.80" y="307.45" width="5.00" height="2.60" fill="#96a26e" rx="0.4"/>
<rect x="200.30" y="307.90" width="4.00" height="1.70" fill="#e2e6c4" rx="0.3"/>
<circle cx="202.30" cy="308.75" r="0.70" fill="#3c4426"/>
<rect x="190.60" y="306.15" width="4.40" height="0.40" fill="#a8a8a8"/>
<rect x="190.40" y="301.99" width="0.40" height="4.56" fill="#c2c2c2"/>
<circle cx="597.10" cy="378.70" r="1.75" fill="#f2f5fa" stroke="#6f95cc" stroke-width="0.6"/>
<rect x="596.20" y="378.50" width="1.90" height="0.45" fill="#6f95cc"/>
<path d="M598.4 380.1 L599.6 381.4" fill="none" stroke="#8a8fa0" stroke-width="0.65"/>
<circle cx="617.80" cy="378.70" r="1.75" fill="#f2f5fa" stroke="#6f95cc" stroke-width="0.6"/>
<rect x="616.90" y="378.50" width="1.90" height="0.45" fill="#6f95cc"/>
<path d="M619.1 380.1 L620.3000000000001 381.4" fill="none" stroke="#8a8fa0" stroke-width="0.65"/>
<rect x="617.60" y="377.80" width="0.45" height="1.90" fill="#6f95cc"/>
<path d="M124.8 35 L129.6 35 L132 37.4 L132 43 L124.8 43 Z" fill="#fbfbfb" stroke="#c9c6c3" stroke-width="0.35"/>
<path d="M129.6 43 L132 40.6 L132 43 Z" fill="#d6d3d0"/>
<circle cx="130.60" cy="36.70" r="2.60" fill="#18a818" stroke="#0c7c0c" stroke-width="0.4"/>
<path d="M130.6 35.2 L130.6 37.8 M129.5 36.9 L130.6 38.1 L131.7 36.9" fill="none" stroke="#fff" stroke-width="0.7"/>
<rect x="136.60" y="36.20" width="8.60" height="6.80" fill="#2f66b4" rx="0.6"/>
<path d="M138 35 L141.6 35 L142.6 36 L142.6 39.6 L138 39.6 Z" fill="#fafafa" stroke="#c8c8c8" stroke-width="0.3"/>
<rect x="136.40" y="39.00" width="9.00" height="4.00" fill="#5a94dc" rx="0.6"/>
<rect x="136.40" y="39.00" width="9.00" height="1.20" fill="#86b4ea" rx="0.5"/>
<rect x="149.00" y="35.00" width="8.20" height="8.00" fill="#666" rx="0.5"/>
<rect x="150.40" y="35.20" width="5.40" height="3.80" fill="#d4d2d0"/>
<rect x="150.80" y="40.00" width="4.60" height="2.80" fill="#8a8a8a"/>
<rect x="151.40" y="40.40" width="1.20" height="2.00" fill="#e0e0e0"/>
<rect x="163.00" y="35.00" width="5.40" height="2.40" fill="#f2f1f0" stroke="#c4c1be" stroke-width="0.3"/>
<rect x="161.20" y="37.20" width="9.00" height="3.60" fill="#b6b3b0" rx="0.6"/>
<rect x="162.60" y="38.20" width="6.20" height="1.60" fill="#8f8c89"/>
<rect x="163.00" y="40.40" width="5.40" height="2.60" fill="#efeeed" stroke="#c4c1be" stroke-width="0.3"/>
<rect x="176.95" y="38.87" width="6.70" height="3.12" fill="#fbfbfa" stroke="#b9b5b2" stroke-width="0.3"/>
<path d="M177.20 38.87 L178.82 37.50 L180.30 37.05 L181.78 37.50 L183.40 38.87 Z" fill="#fbfbfa" stroke="#b9b5b2" stroke-width="0.35"/>
<rect x="176.90" y="38.66" width="6.80" height="0.47" fill="#a9a5a2"/>
<rect x="177.78" y="39.18" width="0.60" height="2.60" fill="#e2e0de"/>
<rect x="182.22" y="39.18" width="0.60" height="2.60" fill="#e2e0de"/>
<ellipse cx="180.35" cy="40.64" rx="0.63" ry="0.99" fill="#0a0a0a"/>
<rect x="176.60" y="41.84" width="7.40" height="0.42" fill="#d6d3d0"/>
<path d="M180.6 36.0 L182.0 36.0 L182.0 34.6 L183.6 34.6 L183.6 36.0 L185.0 36.0 L182.8 38.9 Z" fill="#22a822" stroke="#148014" stroke-width="0.3"/>
<rect x="188.60" y="35.10" width="7.20" height="7.20" fill="#f2f8fd" rx="0.3" stroke="#a9cdea" stroke-width="0.5"/>
<rect x="188.90" y="35.30" width="6.60" height="0.90" fill="#9cc8ec"/>
<rect x="191.40" y="40.90" width="5.60" height="1.90" fill="#96a26e" rx="0.4"/>
<rect x="191.90" y="41.35" width="4.60" height="1.00" fill="#e2e6c4" rx="0.3"/>
<circle cx="194.20" cy="41.85" r="0.51" fill="#3c4426"/>
<path d="M193.1 35.9 L194.5 35.9 L194.5 34.5 L196.1 34.5 L196.1 35.9 L197.5 35.9 L195.3 38.8 Z" fill="#22a822" stroke="#148014" stroke-width="0.3"/>
<rect x="173.60" y="34.80" width="0.35" height="8.40" fill="#cfcbc8"/>
<rect x="173.95" y="34.80" width="0.30" height="8.40" fill="#e8e6e4"/>
<rect x="200.70" y="34.80" width="0.35" height="8.40" fill="#cfcbc8"/>
<rect x="201.05" y="34.80" width="0.30" height="8.40" fill="#e8e6e4"/>
<rect x="204.60" y="35.20" width="7.00" height="7.40" fill="#e9e7e5" rx="0.4" stroke="#cbc7c4" stroke-width="0.4"/>
<path d="M206.0 36.8 L210.2 41.0 M210.2 36.8 L206.0 41.0" fill="none" stroke="#c4c0bd" stroke-width="0.6"/>
<rect x="215.80" y="35.20" width="7.20" height="7.00" fill="#ebe9e7" rx="0.4" stroke="#c9c5c2" stroke-width="0.4"/>
<rect x="216.20" y="35.40" width="6.40" height="1.00" fill="#d0ccc9"/>
<path d="M220.4 42.6 L223.6 38.6" fill="none" stroke="#8e8a87" stroke-width="0.9"/>
<path d="M229.2 36.2 L232.6 36.2 L236.0 38.9 L232.6 41.6 L229.2 41.6 L231.8 38.9 Z" fill="#dcd9d6" stroke="#b9b5b2" stroke-width="0.45"/>
<rect x="242.20" y="35.10" width="6.40" height="7.00" fill="#f4f9fd" rx="0.3" stroke="#9fd0ee" stroke-width="0.5"/>
<rect x="242.50" y="35.30" width="5.80" height="0.90" fill="#8cc8f0"/>
<circle cx="248.30" cy="41.50" r="1.50" fill="#3454b4"/>
<rect x="245.60" y="41.40" width="1.20" height="1.40" fill="#d8d060"/>
<path d="M249.6 41.9 L250.6 42.6 L252.0 40.6" fill="none" stroke="#111" stroke-width="0.7"/>
<rect x="255.40" y="39.80" width="2.20" height="2.20" fill="#35c0f0" rx="0.9"/>
<rect x="257.90" y="39.20" width="2.00" height="2.80" fill="#35c0f0" rx="0.9"/>
<rect x="260.20" y="38.00" width="2.00" height="3.80" fill="#35c0f0" rx="0.9"/>
<rect x="262.60" y="35.40" width="2.30" height="6.20" fill="#35b8ee" rx="0.9"/>
<circle cx="264.30" cy="41.50" r="1.40" fill="#3454b4"/>
<rect x="261.60" y="41.60" width="1.20" height="1.20" fill="#d8d060"/>
<path d="M269.0 36.0 L269.0 42.4 L276.2 42.4" fill="none" stroke="#b4b0ad" stroke-width="0.55"/>
<path d="M270.2 40.8 L272.4 38.6 L273.6 40.2 L275.8 38.0" fill="none" stroke="#a8a4a1" stroke-width="0.6"/>
<rect x="283.80" y="36.00" width="4.60" height="2.00" fill="#46c2f2" rx="0.6"/>
<rect x="284.20" y="38.60" width="2.80" height="2.80" fill="#d2dc8a" rx="0.4"/>
<rect x="286.00" y="38.00" width="5.80" height="2.80" fill="#a8e6f8" rx="0.7"/>
<rect x="286.60" y="40.90" width="5.80" height="1.90" fill="#3a1c0c" rx="0.9"/>
<rect x="289.00" y="40.60" width="1.00" height="1.00" fill="#d8eef6"/>
<rect x="299.80" y="35.00" width="5.60" height="8.00" fill="#767676" rx="0.5"/>
<rect x="300.50" y="35.60" width="4.20" height="1.70" fill="#a4b29e"/>
<rect x="300.70" y="38.00" width="0.90" height="1.00" fill="#b4b4b4"/>
<rect x="302.00" y="38.00" width="0.90" height="1.00" fill="#b4b4b4"/>
<rect x="303.30" y="38.00" width="0.90" height="1.00" fill="#b4b4b4"/>
<rect x="300.70" y="39.60" width="0.90" height="1.00" fill="#b4b4b4"/>
<rect x="302.00" y="39.60" width="0.90" height="1.00" fill="#b4b4b4"/>
<rect x="303.30" y="39.60" width="0.90" height="1.00" fill="#b4b4b4"/>
<rect x="300.70" y="41.20" width="0.90" height="1.00" fill="#b4b4b4"/>
<rect x="302.00" y="41.20" width="0.90" height="1.00" fill="#b4b4b4"/>
<rect x="303.30" y="41.20" width="0.90" height="1.00" fill="#b4b4b4"/>
<rect x="146.20" y="56.40" width="9.60" height="5.60" fill="#dccfb4"/>
<rect x="146.20" y="56.40" width="9.60" height="1.00" fill="#f2ece0"/>
<rect x="147.20" y="57.80" width="1.50" height="2.60" fill="#eef0f2"/>
<rect x="146.40" y="57.60" width="0.80" height="3.00" fill="#a8875e"/>
<rect x="153.30" y="57.80" width="1.50" height="2.60" fill="#eef0f2"/>
<rect x="154.80" y="57.60" width="0.80" height="3.00" fill="#a8875e"/>
<rect x="149.50" y="57.30" width="2.60" height="3.90" fill="#e65a08"/>
<rect x="149.50" y="57.30" width="2.60" height="1.30" fill="#a83600"/>
<rect x="146.20" y="61.20" width="9.60" height="0.80" fill="#9a9a9a"/>
<rect x="149.10" y="61.10" width="3.30" height="0.90" fill="#0a6a0a"/>
<path d="M150.5 52.6 L146.4 56.6 L154.8 56.6 Z" fill="#fbfaf8"/>
<path d="M145.2 56.6 L150.5 51.4 L155.9 56.6" fill="none" stroke="#3a3a3a" stroke-width="1.0"/>
<rect x="153.20" y="52.30" width="1.20" height="1.80" fill="#555"/>
<path d="M145.0 78.3 L150.7 74.2 L156.4 78.3 Z" fill="#f6f4f2" stroke="#c9c4c0" stroke-width="0.35"/>
<rect x="145.30" y="78.20" width="10.80" height="0.85" fill="#aeaaa6"/>
<rect x="145.80" y="79.00" width="9.80" height="4.10" fill="#fcfbfa"/>
<rect x="146.30" y="79.20" width="0.90" height="3.70" fill="#e4dfdb"/>
<rect x="147.20" y="79.20" width="0.30" height="3.70" fill="#cfcac6"/>
<rect x="148.20" y="79.20" width="0.90" height="3.70" fill="#e4dfdb"/>
<rect x="149.10" y="79.20" width="0.30" height="3.70" fill="#cfcac6"/>
<rect x="152.30" y="79.20" width="0.90" height="3.70" fill="#e4dfdb"/>
<rect x="153.20" y="79.20" width="0.30" height="3.70" fill="#cfcac6"/>
<rect x="154.20" y="79.20" width="0.90" height="3.70" fill="#e4dfdb"/>
<rect x="155.10" y="79.20" width="0.30" height="3.70" fill="#cfcac6"/>
<rect x="149.80" y="79.90" width="1.80" height="2.50" fill="#050505" rx="0.8"/>
<rect x="145.10" y="83.00" width="11.20" height="0.75" fill="#d9d4d0"/>
<rect x="144.70" y="95.10" width="10.20" height="11.80" fill="#f4f2f2" rx="0.4" stroke="#c8c0c0" stroke-width="0.4"/>
<rect x="144.90" y="95.20" width="9.80" height="1.30" fill="#a9a9a9"/>
<rect x="144.90" y="106.20" width="5.00" height="0.70" fill="#b0b0b0"/>
<rect x="146.00" y="97.00" width="8.00" height="9.00" fill="#a8dcf4"/>
<rect x="146.60" y="98.00" width="2.00" height="1.90" fill="#ffffff"/>
<rect x="149.20" y="98.00" width="2.00" height="1.90" fill="#ffffff"/>
<rect x="151.80" y="98.00" width="2.00" height="1.90" fill="#ffffff"/>
<rect x="146.60" y="100.20" width="2.00" height="1.90" fill="#ffffff"/>
<rect x="149.20" y="100.20" width="2.00" height="1.90" fill="#ffffff"/>
<rect x="151.80" y="100.20" width="2.00" height="1.90" fill="#ffffff"/>
<rect x="146.60" y="102.40" width="2.00" height="1.90" fill="#ffffff"/>
<rect x="149.20" y="102.40" width="2.00" height="1.90" fill="#ffffff"/>
<rect x="151.80" y="102.40" width="2.00" height="1.90" fill="#ffffff"/>
<rect x="149.60" y="99.00" width="1.20" height="2.60" fill="#f09a9a"/>
<rect x="152.40" y="100.60" width="1.20" height="0.80" fill="#4ab84a"/>
<rect x="148.90" y="103.10" width="7.80" height="4.20" fill="#96a26e" rx="0.4"/>
<rect x="149.40" y="103.55" width="6.80" height="3.30" fill="#e2e6c4" rx="0.3"/>
<circle cx="152.80" cy="105.20" r="1.13" fill="#3c4426"/>
<rect x="145.10" y="117.40" width="12.10" height="12.50" fill="#6e6e6e" rx="1.0"/>
<rect x="145.70" y="118.00" width="10.90" height="10.90" fill="#ffffff" rx="0.5"/>
<rect x="145.10" y="117.30" width="12.10" height="2.70" fill="#23ac00" rx="0.9"/>
<rect x="145.40" y="119.30" width="11.50" height="1.00" fill="#6ae23a"/>
<rect x="145.70" y="128.40" width="10.90" height="0.90" fill="#c8c8c8"/>
<rect x="145.20" y="145.20" width="9.80" height="4.60" fill="#e6e6e6" rx="0.3"/>
<rect x="145.20" y="145.20" width="9.80" height="1.20" fill="#c9c9c9"/>
<rect x="145.20" y="148.00" width="9.80" height="1.00" fill="#b4b4b4"/>
<rect x="150.40" y="147.00" width="0.80" height="1.80" fill="#f0a0a0"/>
<rect x="152.40" y="147.00" width="0.80" height="1.80" fill="#a0e0a0"/>
<rect x="144.60" y="149.20" width="6.60" height="8.00" fill="#f3f6fb" rx="0.3" stroke="#d8d4d0" stroke-width="0.3"/>
<rect x="145.40" y="150.20" width="5.00" height="6.00" fill="#d4e6f8"/>
<rect x="147.60" y="150.60" width="0.90" height="5.20" fill="#ffffff"/>
<rect x="151.00" y="149.90" width="6.00" height="7.70" fill="#b9b9b9" rx="0.5"/>
<rect x="151.50" y="150.30" width="5.00" height="1.40" fill="#3a62b0"/>
<rect x="151.60" y="152.20" width="4.80" height="4.80" fill="#dadada"/>
<rect x="155.00" y="155.40" width="1.60" height="1.80" fill="#7ab4f0"/>
<rect x="145.30" y="167.10" width="10.40" height="12.00" fill="#f7f7f7" rx="0.3" stroke="#dcdcdc" stroke-width="0.4"/>
<rect x="147.00" y="169.00" width="3.80" height="0.70" fill="#b4b4b4"/>
<rect x="147.00" y="171.10" width="3.80" height="0.70" fill="#c4c4c4"/>
<rect x="147.00" y="173.20" width="7.00" height="0.60" fill="#e0e0e0"/>
<rect x="152.60" y="168.00" width="2.80" height="3.00" fill="#1448c4" rx="0.5"/>
<rect x="145.40" y="174.80" width="6.80" height="4.20" fill="#6e6e6e" rx="0.3"/>
<rect x="146.60" y="175.00" width="5.60" height="3.20" fill="#f4f0ee"/>
<rect x="146.60" y="175.00" width="5.00" height="1.20" fill="#86c6fc"/>
<rect x="151.00" y="176.40" width="1.00" height="0.90" fill="#5ac040"/>
<rect x="151.00" y="177.40" width="1.00" height="0.90" fill="#e050c0"/>
<rect x="144.90" y="196.60" width="7.20" height="4.20" fill="#e8e8f8" rx="1.6"/>
<circle cx="148.60" cy="193.60" r="1.90" fill="#f3d2b4"/>
<path d="M146.7 193.0 Q148.6 190.4 150.5 193.0 Z" fill="#8a5c3c"/>
<rect x="147.90" y="195.20" width="1.40" height="1.60" fill="#e8c4a4"/>
<rect x="151.90" y="193.60" width="5.00" height="4.40" fill="#e9c79e" rx="1.2"/>
<rect x="153.60" y="193.80" width="1.40" height="4.20" fill="#6a2a10"/>
<circle cx="153.60" cy="191.80" r="1.80" fill="#f4d6bc"/>
<path d="M151.7 191.6 Q153.6 188.6 155.5 191.6 Z" fill="#4a2a12"/>
<rect x="145.30" y="211.60" width="10.60" height="12.00" fill="#c6c6c6" rx="0.5"/>
<rect x="145.90" y="212.00" width="9.40" height="10.80" fill="#f6f6f6" rx="0.3"/>
<rect x="147.00" y="213.20" width="2.00" height="7.60" fill="#d8d8d8"/>
<rect x="149.60" y="213.20" width="0.50" height="7.60" fill="#c0c0c0"/>
<rect x="150.80" y="213.40" width="1.50" height="7.00" fill="#f4a4a4"/>
<rect x="153.20" y="214.20" width="1.20" height="0.90" fill="#7ad07a"/>
<rect x="153.20" y="216.40" width="1.20" height="0.90" fill="#a8e0a8"/>
<rect x="153.20" y="221.00" width="1.40" height="0.90" fill="#9cd89c"/>
<rect x="146.40" y="220.80" width="8.40" height="0.50" fill="#d0d0d0"/>
<rect x="144.20" y="240.00" width="3.00" height="4.20" fill="#32b4e4" rx="1.4"/>
<rect x="147.80" y="239.00" width="2.40" height="5.00" fill="#34b6e6" rx="1.1"/>
<rect x="150.90" y="237.80" width="2.40" height="4.40" fill="#2cb0e4" rx="1.1"/>
<rect x="153.9" y="235.0" width="2.8" height="7.0" rx="1.2" fill="url(#gb)"/>
<rect x="148.90" y="241.90" width="8.00" height="4.00" fill="#96a26e" rx="0.4"/>
<rect x="149.40" y="242.35" width="7.00" height="3.10" fill="#e2e6c4" rx="0.3"/>
<circle cx="152.90" cy="243.90" r="1.08" fill="#3c4426"/>
<rect x="145.40" y="257.00" width="0.60" height="10.60" fill="#555" stroke-dasharray="1 0.6"/>
<rect x="145.40" y="267.20" width="10.80" height="0.50" fill="#b0a8a0"/>
<rect x="146.2" y="262.0" width="3.2" height="5.4" rx="0.7" fill="url(#gr)"/>
<rect x="147.32" y="262.80" width="0.80" height="2.40" fill="#eef4ff" rx="0.3"/>
<rect x="149.6" y="260.2" width="3.0" height="7.2" rx="0.7" fill="url(#gr)"/>
<rect x="150.65" y="261.00" width="0.75" height="2.40" fill="#eef4ff" rx="0.3"/>
<rect x="153.0" y="261.2" width="2.4" height="6.2" rx="0.7" fill="url(#gr)"/>
<rect x="153.84" y="262.00" width="0.60" height="2.40" fill="#eef4ff" rx="0.3"/>
<rect x="144.9" y="279.0" width="12.2" height="2.2" rx="0.6" fill="url(#gt)"/>
<rect x="147.60" y="281.20" width="3.80" height="1.10" fill="#52c422"/>
<rect x="144.80" y="282.00" width="6.80" height="7.20" fill="#f2f2f6" rx="0.3" stroke="#e0dcdc" stroke-width="0.3"/>
<rect x="146.00" y="283.20" width="1.00" height="4.60" fill="#cfe2f4"/>
<circle cx="148.80" cy="285.20" r="1.30" fill="#2a98c8"/>
<circle cx="150.40" cy="286.60" r="0.80" fill="#1a80b0"/>
<rect x="151.10" y="282.90" width="6.00" height="7.30" fill="#b4b4b4" rx="0.5"/>
<rect x="151.50" y="283.30" width="5.20" height="1.70" fill="#4664a4"/>
<rect x="151.70" y="285.60" width="4.80" height="4.00" fill="#c8c8c8"/>
<rect x="155.20" y="288.20" width="1.60" height="1.80" fill="#86b8f0"/>
<ellipse cx="150.8" cy="311.2" rx="4.9" ry="1.0" fill="#46b4d4"/>
<path d="M150.4 300.4 Q151.6 302.6 152.0 305.6 Q153.4 308.6 155.0 311.0 L146.4 311.0 Q148.2 308.8 149.0 305.4 Q149.6 302.4 150.4 300.4 Z" fill="url(#gf)"/>
<path d="M150.9 302.6 Q151.7 306.6 152.6 310.4 L150.6 310.4 Q150.4 306.0 150.9 302.6 Z" fill="#e6f8fd"/>
<circle cx="150.80" cy="327.40" r="5.10" fill="#1c38b4"/>
<path d="M147.2 324.8 Q149.2 323.0 151.6 323.6 Q150.0 325.4 148.0 326.2 Z" fill="#bcd4f4"/>
<rect x="147.20" y="326.40" width="3.50" height="5.20" fill="#8a6c60"/>
<rect x="150.50" y="325.80" width="3.80" height="5.40" fill="#cfcac6"/>
<rect x="149.00" y="325.60" width="4.60" height="1.00" fill="#b8b0ac" rx="0.5"/>
<path d="M150.3 325.6 L152.3 324.2 L154.3 325.6 Z" fill="#efeae6"/>
<rect x="146.60" y="331.20" width="8.60" height="0.70" fill="#9a6a4a"/>
<rect x="146.20" y="333.00" width="9.20" height="0.50" fill="#c8c8c8"/>
<rect x="148.90" y="333.90" width="3.80" height="0.80" fill="#4a4a4a" rx="0.3"/>
</svg>
</div></body></html>
